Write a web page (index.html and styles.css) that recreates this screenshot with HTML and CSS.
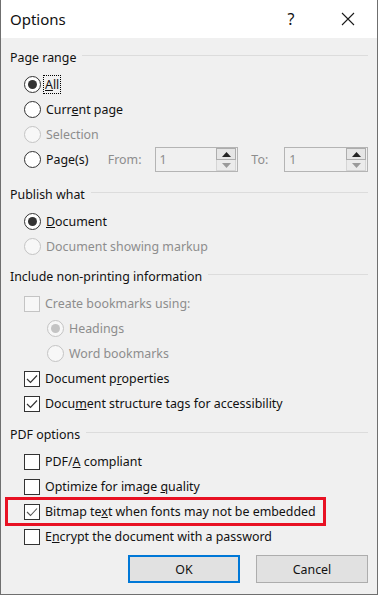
FILE: index.html
```html
<!DOCTYPE html>
<html>
<head>
<meta charset="utf-8">
<link rel="stylesheet" href="styles.css">
</head>
<body>
<div class="window">
  <div class="titlebar">
    <span class="title">Options</span>
    <span class="help">?</span>
    <span class="close"><svg width="14" height="14" viewBox="0 0 14 14"><path d="M1 1 L13 13 M13 1 L1 13" stroke="#1a1a1a" stroke-width="1.1" fill="none"/></svg></span>
  </div>
  <div class="content">
    <section class="group g1">
      <div class="head"><span>Page range</span><span class="rule"></span></div>
      <div class="row"><span class="radio checked"></span><span class="label focus"><u>A</u>ll</span></div>
      <div class="row"><span class="radio"></span><span class="label">Curr<u>e</u>nt page</span></div>
      <div class="row disabled"><span class="radio"></span><span class="label">Selection</span></div>
      <div class="row pages">
        <span class="opt"><span class="radio"></span><span class="label">Pa<u>g</u>e(s)</span></span>
        <span class="dim from">From:</span>
        <span class="spin"><span class="val">1</span><span class="btns"><span class="up"><svg width="9" height="5" viewBox="0 0 9 5"><path d="M0 5 L4.5 0 L9 5Z" fill="#222"/></svg></span><span class="down"><svg width="9" height="5" viewBox="0 0 9 5"><path d="M0 0 L4.5 5 L9 0Z" fill="#9a9a9a"/></svg></span></span></span>
        <span class="dim to">To:</span>
        <span class="spin"><span class="val">1</span><span class="btns"><span class="up"><svg width="9" height="5" viewBox="0 0 9 5"><path d="M0 5 L4.5 0 L9 5Z" fill="#222"/></svg></span><span class="down"><svg width="9" height="5" viewBox="0 0 9 5"><path d="M0 0 L4.5 5 L9 0Z" fill="#9a9a9a"/></svg></span></span></span>
      </div>
    </section>
    <section class="group g2">
      <div class="head"><span>Publish what</span><span class="rule"></span></div>
      <div class="row"><span class="radio checked"></span><span class="label"><u>D</u>ocument</span></div>
      <div class="row disabled"><span class="radio"></span><span class="label">Document showing markup</span></div>
    </section>
    <section class="group g3">
      <div class="head"><span>Include non-printing information</span><span class="rule"></span></div>
      <div class="row disabled"><span class="check"></span><span class="label">Create bookmarks using:</span></div>
      <div class="row disabled indent"><span class="radio checked"></span><span class="label">Headings</span></div>
      <div class="row disabled indent"><span class="radio"></span><span class="label">Word bookmarks</span></div>
      <div class="row"><span class="check on"><svg width="12" height="10" viewBox="0 0 12 10"><path d="M1 5 L4.5 8.5 L11 1.5" stroke="#333" stroke-width="1.2" fill="none"/></svg></span><span class="label">Document p<u>r</u>operties</span></div>
      <div class="row"><span class="check on"><svg width="12" height="10" viewBox="0 0 12 10"><path d="M1 5 L4.5 8.5 L11 1.5" stroke="#333" stroke-width="1.2" fill="none"/></svg></span><span class="label">Docu<u>m</u>ent structure tags for accessibility</span></div>
    </section>
    <section class="group g4">
      <div class="head"><span>PDF options</span><span class="rule"></span></div>
      <div class="row"><span class="check"></span><span class="label">PDF/<u>A</u> compliant</span></div>
      <div class="row"><span class="check"></span><span class="label">Optimize for image <u>q</u>uality</span></div>
      <div class="row highlight"><span class="check on"><svg width="12" height="10" viewBox="0 0 12 10"><path d="M1 5 L4.5 8.5 L11 1.5" stroke="#555" stroke-width="1.1" fill="none"/></svg></span><span class="label">Bitmap te<u>x</u>t when fonts may not be embedded</span></div>
      <div class="row"><span class="check"></span><span class="label">E<u>n</u>crypt the document with a password</span></div>
    </section>
    <div class="buttons">
      <button class="btn default">OK</button>
      <button class="btn">Cancel</button>
    </div>
  </div>
</div>
</body>
</html>
```
FILE: styles.css
```css
html, body { margin: 0; padding: 0; }
body {
  font-family: "Noto Sans", "Open Sans", sans-serif;
  font-size: 12.4px;
  color: #111;
}
.window {
  width: 378px;
  height: 595px;
  box-sizing: border-box;
  border: 1px solid #6f6f6f;
  border-top: none;
  background: #f0f0f0;
  display: flex;
  flex-direction: column;
  overflow: hidden;
}
.titlebar {
  height: 38px;
  flex: none;
  background: #fff;
  display: flex;
  align-items: center;
}
.title {
  flex: 1;
  margin-left: 9px;
  font-size: 15px;
  color: #111;
}
.help {
  width: 20px;
  text-align: center;
  font-size: 16px;
  color: #111;
}
.close {
  width: 46px;
  margin-left: 24px;
  margin-right: 6px;
  display: flex;
  justify-content: center;
  align-items: center;
}
.content {
  padding: 0 9px;
  display: flex;
  flex-direction: column;
}
.head {
  height: 16px;
  display: flex;
  align-items: center;
  margin-bottom: 7px;
}
.rule {
  flex: 1;
  height: 1px;
  background: #dcdcdc;
  margin-left: 6px;
  margin-top: -3px;
}
.g1 { margin-top: 11px; }
.g2 { margin-top: 14px; }
.g3 { margin-top: 9px; }
.g4 { margin-top: 10px; }
.row {
  height: 25px;
  display: flex;
  align-items: center;
  padding-left: 14px;
  box-sizing: border-box;
}
.row.indent { padding-left: 37px; }
.opt { display: flex; align-items: center; width: 84px; }
.label { margin-left: 5px; white-space: nowrap; }
.focus { outline: 1px dotted #000; outline-offset: 0; padding: 0 1px; margin-left: 3px; }
.radio {
  width: 15px;
  height: 15px;
  border: 1px solid #333;
  border-radius: 50%;
  background: #fff;
  flex: none;
  display: flex;
  align-items: center;
  justify-content: center;
}
.radio.checked::after {
  content: "";
  width: 9px;
  height: 9px;
  border-radius: 50%;
  background: #333;
}
.check {
  width: 14px;
  height: 14px;
  border: 1px solid #333;
  background: #fff;
  flex: none;
  display: flex;
  align-items: center;
  justify-content: center;
}
.disabled { color: #8d8d8d; }
.disabled .radio, .disabled .check { border-color: #c4c4c4; background: #f7f7f7; }
.disabled .radio.checked::after { background: #c4c4c4; }
.dim { color: #8d8d8d; }
.from { width: 47px; }
.to { width: 33px; margin-left: 13px; }
.spin {
  width: 84px;
  height: 25px;
  box-sizing: border-box;
  border: 1px solid #b4b4b4;
  background: #f0f0f0;
  display: flex;
  align-items: center;
  justify-content: space-between;
}
.val { color: #8d8d8d; margin-left: 4px; }
.btns {
  display: flex;
  flex-direction: column;
  width: 20px;
  height: 23px;
  margin-right: 1px;
}
.up, .down {
  flex: 1;
  display: flex;
  align-items: center;
  justify-content: center;
  box-sizing: border-box;
}
.up { background: #e5e5e5; border: 1px solid #adadad; }
.down { background: #ebebeb; border: 1px solid #d5d5d5; border-top: none; }
.highlight {
  outline: 3px solid #e81123;
  outline-offset: -1px;
  margin-left: -3px;
  padding-left: 17px;
  width: 317px;
  height: 25px;
}
.buttons {
  display: flex;
  justify-content: flex-end;
  gap: 16px;
  margin-top: 6px;
  padding-right: 0;
}
.btn {
  width: 112px;
  height: 28px;
  font-family: "Noto Sans", "Open Sans", sans-serif;
  font-size: 12.4px;
  color: #111;
  background: #e1e1e1;
  border: 1px solid #adadad;
  padding: 0;
}
.btn.default { border: 2px solid #0078d7; }
```
